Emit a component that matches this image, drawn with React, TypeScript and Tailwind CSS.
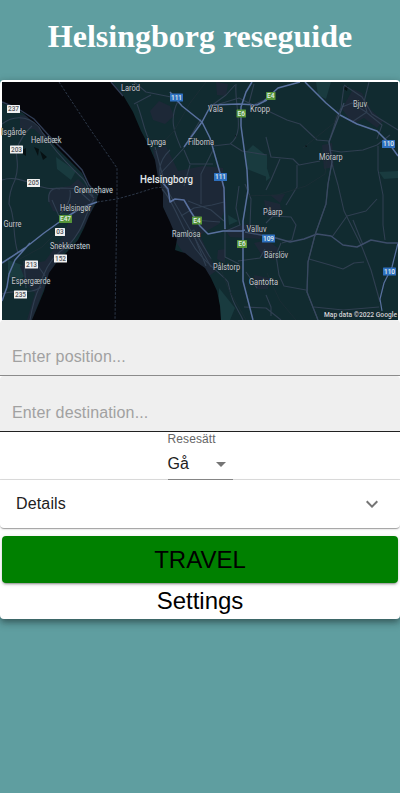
import React from "react";

type Label = [string, number, number, number];

const labels: Label[] = [
  ["Laröd", 121, 91, 19],
  ["lsgårde", 1.5, 134.5, 24.5],
  ["Hellebæk", 31, 143, 30.5],
  ["Grønnehave", 74, 193, 39],
  ["Helsingør", 60, 211, 31],
  ["Gurre", 3.5, 227, 18],
  ["Snekkersten", 50, 249, 40],
  ["Espergærde", 11.5, 284, 39],
  ["Lynga", 147, 145, 19],
  ["Filborna", 188, 145, 26],
  ["Väla", 208, 112, 15],
  ["Kropp", 250, 111.5, 20],
  ["Bjuv", 353, 107, 14],
  ["Mörarp", 319, 160, 23.5],
  ["Påarp", 263, 215, 19.5],
  ["Ramlosa", 172, 237, 28.5],
  ["Välluv", 246.5, 232, 20],
  ["Pålstorp", 213, 270, 27],
  ["Bärslöv", 264, 257.5, 24],
  ["Gantofta", 249, 284.5, 29],
];

type Shield = [string, number, number, number, "white" | "green" | "blue"];

const shields: Shield[] = [
  ["237", 7, 105, 13, "white"],
  ["203", 10, 145.5, 13, "white"],
  ["205", 27, 179, 13, "white"],
  ["E47", 59, 215, 13, "green"],
  ["03", 55, 228, 10, "white"],
  ["213", 25, 260.5, 13, "white"],
  ["152", 54, 254.5, 13, "white"],
  ["235", 14, 290.5, 13, "white"],
  ["111", 170, 93.5, 13, "blue"],
  ["111", 214, 173, 13, "blue"],
  ["E6", 236.5, 109.5, 9.5, "green"],
  ["E4", 266, 92, 9.5, "green"],
  ["E4", 192, 216.5, 10, "green"],
  ["E6", 237, 240, 10, "green"],
  ["109", 262, 234.5, 13, "blue"],
  ["110", 382, 140, 13, "blue"],
  ["110", 383, 267.5, 13, "blue"],
];

const minorRoads = [
  "M2 124 C16 113 34 117 42 132 C58 156 70 166 80 176 C90 184 86 190 93 196",
  "M2 180 C14 176 24 181 34 184 C44 189 50 189 62 188 L84 189 L94 198",
  "M32 126 C24 133 19 142 16 151 C17 160 19 168 15 180 C11 188 9 196 9 204 C16 216 12 236 18 253",
  "M49 202 C47 190 54 187 60 189 M70 190 C72 200 66 207 60 214 M78 190 L90 201 M59 216 L52 200",
  "M94 199 C84 216 84 229 68 246 C56 253 45 266 40 286 C34 298 32 308 30 320",
  "M2 294 C13 289 32 295 41 287 M24 261 L26 288 M36 263 L45 276",
  "M134 82 L146 92 L171 97 M134 104 L151 95 M137 104 C143 119 144 132 151 144",
  "M178 101 C169 119 174 132 181 148 M170 150 C156 163 158 178 166 188 M155 147 L166 188 L188 226 L211 267",
  "M201 119 L183 149 L160 174 M184 150 L190 164 L213 164 M190 165 L184 186",
  "M216 105 L239 98 L253 105 L267 99 M235 85 L226 95 L211 106 M254 84 L249 103",
  "M213 146 L230 144 C246 133 234 105 236 84 M231 144 L242 151 L267 155 M214 148 L201 174 L201 204",
  "M266 110 L287 120 L300 124 L317 140 L329 141 M266 137 L271 157 L293 159 L299 165 L320 161 M297 165 L297 187 L286 205 M280 159 L271 180 L266 190",
  "M329 150 L341 152 L363 150 L377 145 L390 135 M378 146 L378 170 L383 195 L383 225 L385 240",
  "M344 86 L341 108 L337 117 L329 142 L332 162 L328 184 L326 204 L315 235 L308 262 L307 292 L318 320 M332 164 L338 185 L344 211 L362 247 L371 270 L380 302",
  "M342 107 L352 103 L366 112 L382 125 L377 139 M344 85 L362 97 L372 114 L398 130 M369 82 L364 102 L367 112 M367 112 L352 122",
  "M266 223 L273 216 L291 217 L296 225 L292 240 L282 243 M281 243 L276 255 L279 275 L284 286 L306 290",
  "M309 259 L330 265 L343 269 L354 263 L364 262 M314 307 L343 310 L379 307",
  "M332 237 L347 216 L366 211 L377 199 M353 220 L363 245 M239 186 L236 208 L240 225 L226 231 M238 261 L260 258 L265 249",
  "M162 189 C172 199 180 223 190 240 C201 261 220 272 228 282 C232 304 238 309 243 320",
  "M181 216 L194 208 L212 205 L224 202 M188 201 L211 210 L224 221 M194 220 L220 222 M183 236 L194 230 L211 259 M195 238 L206 266",
  "M244 307 L266 308 L281 320 M266 295 L271 307 L271 316 M246 272 L257 288",
  "M225 228 L225 257 L239 264 M245 184 L251 199 L250 226",
];

const shieldFill = { white: "#f1f1f1", green: "#56953a", blue: "#2e70bf" };

function TownMap() {
  return (
    <svg viewBox="2 82 396 238" className="block h-[238px] w-full overflow-visible" aria-label="Map">
      <defs>
        <filter id="soften" x="0" y="0" width="1" height="1" colorInterpolationFilters="sRGB"><feGaussianBlur stdDeviation="0.45" /></filter>
        <clipPath id="frame"><rect x="2" y="82" width="396" height="238" /></clipPath>
      </defs>
      <rect x="2" y="82" width="396" height="238" fill="#112b30" />
      <g clipPath="url(#frame)">
      <g filter="url(#soften)">
        <g fill="#193b3f">
          <path d="M34 119 L48 126 L63 143 L59 148 L44 137Z M56 157 L76 171 L71 180 L57 169Z M316 82 L331 82 L326 99 L318 95Z M245 153 L253 145 L267 156 L267 177 L247 169Z M379 172 L398 171 L398 178 L384 179Z M8 260 L22 265 L27 274 L17 282 L8 276Z M219 288 L235 308 L230 320 L218 320Z" />
          <path d="M61 203 L70 210 L67 221 L59 211Z M228 215 L238 221 L229 225Z M266 165 L270 178 L266 181Z" />
        </g>
        <g fill="#1d2837">
          <path d="M20 115 L37 117 L58 144 L48 143 L34 129 L20 129Z M50 189 L70 186 L78 179 L97 197 L87 223 L63 253 L52 269 L43 291 L32 320 L27 320 L35 293 L27 285 L20 266 L45 261 L62 238 L72 214 L53 211 L48 200Z" />
          <path d="M153 149 L166 146 L178 171 L203 166 L223 168 L226 207 L219 224 L200 235 L216 271 L209 276 L184 254 L174 239 L165 215 L158 182Z M150 111 L159 101 L170 106 L174 116 L165 124 L153 120Z" />
          <path d="M342 109 L353 89 L362 93 L371 110 L383 121 L377 128 L364 118 L353 124Z M322 145 L332 143 L334 167 L324 169Z M254 243 L267 240 L278 248 L276 260 L263 257Z M264 200 L280 204 L282 214 L267 217Z M254 275 L269 278 L268 289 L256 289Z M216 82 L228 84 L226 96 L217 95Z M218 250 L225 249 L225 263 L217 259Z M225 230 L247 224 L263 231 L260 239 L230 237Z M270 195 L285 194 L280 203Z" />
        </g>
        <path d="M2 82 L112 82 L123 95 L133 112 L141 131 L149 146 L155 160 L158 178 L163 193 L163 207 L170 222 L177 239 L175 250 L181 252 L185 253 L195 261 L205 268 L211 278 L217 291 L220 306 L221 320 L32 320 L37 308 L44 291 L49 273 L57 262 L67 252 L78 240 L84 228 L89 216 L96 203 L98 195 L89 187 L82 173 L70 161 L56 147 L47 137 L35 124 L23 113 L12 107 L2 103Z" fill="#06070c" />
        <g fill="#071113"><path d="M22 150 L26 148 L26 156 L21 153Z M34 147 L39 149 L38 156Z M40 151 L47 157 L43 160Z M345 86 L348 86 L347 91 L344 89Z" /><circle cx="236" cy="136" r="1" /><circle cx="306" cy="146" r="1" /></g>
        <path d="M2 102 L17 108 L34 119 L52 139 L68 155 L82 170 L89 185 L98 195 M111 82 L123 96" fill="none" stroke="#303c54" strokeWidth="1.4" />
        <g fill="none" stroke="#303f51" strokeWidth="1.1" strokeLinejoin="round">
          {minorRoads.map((road) => <path key={road} d={road} />)}
          <path d="M206 82 L190 103 L174 131 L155 151 M338 109 L334 123 L303 148 M327 156 L325 174 L306 186 L277 195 L244 196 M59 230 L42 247 L20 259 M267 273 L280 301 L296 320 M208 256 L222 272 L229 290 L246 320" stroke="#1c2e36" strokeWidth="0.9" />
        </g>
        <g fill="none" stroke="#59719f" strokeWidth="1.5" strokeLinejoin="round">
          <path d="M170 92 L182 106 L202 122 L210 138 L220 173 L224 188 L225 229 M184 147 L202 122 L211 105 L239 104 L257 105 L267 100" />
          <path d="M252 82 L246 92 L241 107 L241 126 L247 170 L248 190 L243 221 L243 281 L253 320 M264 101 L278 88 L300 82 M305 82 L326 103 L340 115 L357 124 L377 131 L388 142 L398 156" />
          <path d="M162 182 L168 189 L170 202 L175 199 L184 200 L191 212 L200 226 L208 234 L223 231 L242 231 L245 230" />
          <path d="M97 202 L81 208 L65 218 L44 233 L25 248 L2 263 M30 243 L15 260 L9 274 L7 287 L2 301" />
          <path d="M398 243 L392 267 L384 283 L380 299 L382 311" strokeWidth="1.2" />
          <path d="M245 232 L276 238 L290 242 L304 239 L317 234 L331 236 L343 245 L357 247 L371 240 L387 243 L398 243" stroke="#3d4d69" />
          <path d="M344 103 L329 142 L332 162 L328 184 L326 204 L315 235 L308 262 L307 292 L318 320" stroke="#394960" strokeWidth="1.3" />
        </g>
        <g fill="none" stroke="#303c4e" strokeWidth="0.9" strokeDasharray="2.5 1.5">
          <path d="M59 82 L90 129 L117 168 L117 199 L115 320 M97 202 L117 199 L135 194 L154 188 L165 187" />
        </g>
      </g>
      </g>
      <g fontFamily="Roboto, sans-serif">
        {shields.map(([name, x, y, width, color], index) => (
          <g key={index}>
            <rect x={x} y={y} width={width} height="8" rx="0.5" fill={shieldFill[color]} />
            <text x={x + width / 2} y={y + 6.4} textAnchor="middle" fontSize="6.5" fontWeight="500" fill={color === "white" ? "#505358" : "#e3efed"}>{name}</text>
          </g>
        ))}
        <g fontSize="8.6" fill="#c5cbd0" stroke="#17242c" strokeWidth="0.8" paintOrder="stroke" strokeLinejoin="round">
          {labels.map(([name, x, y, width]) => (
            <text key={name} x={x} y={y} textLength={width} lengthAdjust="spacingAndGlyphs">{name}</text>
          ))}
          <text x="140" y="183" fontSize="11.5" fontWeight="500" fill="#e2e5e8" textLength="53" lengthAdjust="spacingAndGlyphs">Helsingborg</text>
          <text x="324" y="317" fontSize="7.9" fontWeight="500" fill="#d0d5d7" textLength="73" lengthAdjust="spacingAndGlyphs">Map data ©2022 Google</text>
        </g>
      </g>
    </svg>
  );
}

export default function App() {
  return (
    <main className="h-[793px] w-full overflow-hidden bg-[#5f9ea0] font-['Liberation_Sans',Arial,sans-serif]">
      <h1 className="flex h-20 items-center justify-center pb-[7px] font-['Liberation_Serif',serif] text-[32px] leading-[37px] font-bold text-white">Helsingborg reseguide</h1>
      <section className="h-[539px] rounded bg-white shadow-[0_5px_5px_-3px_rgba(0,0,0,.2),0_3px_6px_1px_rgba(0,0,0,.18),0_3px_10px_2px_rgba(0,0,0,.12)]">
        <div className="px-[2px] pt-[2px]"><TownMap /></div>
        <input aria-label="Position" placeholder="Enter position..." className="block h-14 w-full rounded-t border-b border-[#8b8b8b] bg-[#efefef] px-3 pt-[26px] pb-[7px] text-[16px] leading-[23px] tracking-[0.15px] outline-none placeholder:text-[#a1a1a1]" />
        <input aria-label="Destination" placeholder="Enter destination..." className="block h-14 w-full rounded-t border-b border-[#212121] bg-[#efefef] px-3 pt-[26px] pb-[7px] text-[16px] leading-[23px] tracking-[0.15px] outline-none placeholder:text-[#a1a1a1]" />
        <div className="flex h-12 justify-center border-b border-[#dddddd]">
          <div className="h-12 w-[65px] border-b border-[#858585]">
            <div className="h-4 text-[12px] leading-[15px] tracking-[0.11px] text-[#666666]">Resesätt</div>
            <button className="flex h-8 w-full items-center justify-between text-[16px] tracking-[0.15px] text-[#212121]">
              <span>Gå</span>
              <svg viewBox="0 0 24 24" className="h-6 w-6" fill="#757575"><path d="M7 10l5 5 5-5z" /></svg>
            </button>
          </div>
        </div>
        <button className="flex h-12 w-full items-center justify-between rounded-b px-4 text-[16px] tracking-[0.15px] text-[#212121] shadow-[0_2px_1px_-1px_rgba(0,0,0,.2),0_1px_1px_0_rgba(0,0,0,.14),0_1px_3px_0_rgba(0,0,0,.12)]">
          <span>Details</span>
          <svg viewBox="0 0 24 24" className="h-6 w-6" fill="#757575"><path d="M16.59 8.59 12 13.17 7.41 8.59 6 10l6 6 6-6z" /></svg>
        </button>
        <div className="px-[2px] pt-2">
          <button className="flex h-[47px] w-full items-center justify-center rounded bg-[green] text-[24px] leading-[28px] text-black shadow-[0_3px_1px_-2px_rgba(0,0,0,.2),0_2px_2px_0_rgba(0,0,0,.14),0_1px_5px_0_rgba(0,0,0,.12)]">TRAVEL</button>
        </div>
        <div className="flex h-9 items-center justify-center text-[24px] leading-[28px] text-black">Settings</div>
      </section>
    </main>
  );
}
